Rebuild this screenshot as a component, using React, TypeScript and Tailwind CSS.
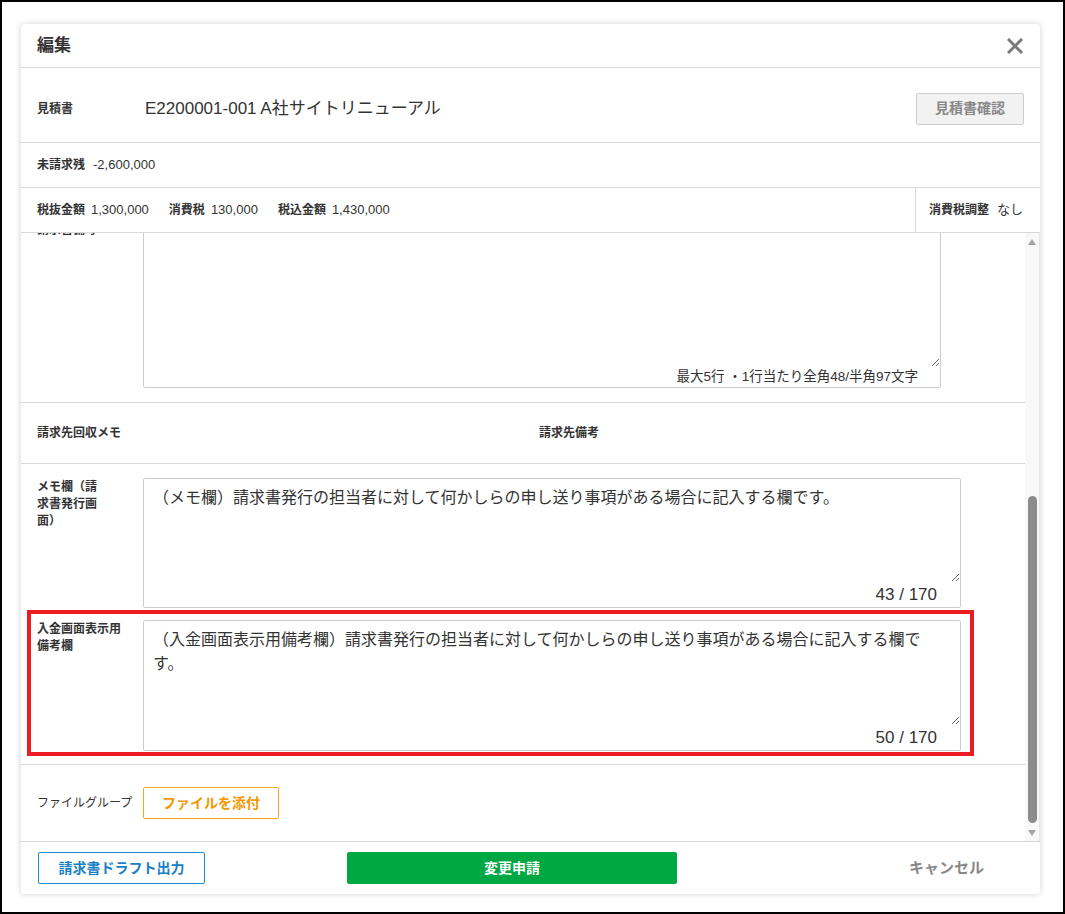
import React from "react";

const memoText =
  "（メモ欄）請求書発行の担当者に対して何かしらの申し送り事項がある場合に記入する欄です。";
const depositText =
  "（入金画面表示用備考欄）請求書発行の担当者に対して何かしらの申し送り事項がある場合に記入する欄です。";

function CountedArea({ value, count, tall }: { value: string; count: string; tall?: boolean }) {
  return (
    <div className={`flex w-[818px] flex-col rounded-[2px] border border-[#cccccc] bg-white ${tall ? "h-[131px]" : "h-[130px]"}`}>
      <textarea
        readOnly
        value={value}
        className="h-[104px] w-full resize-y overflow-hidden bg-transparent pl-[9px] pr-[30px] pt-[7px] text-[16px] leading-[24px] text-[#333] outline-none"
      />
      <div className="flex flex-1 items-center justify-end pr-[23px] text-[17px] text-[#333]">{count}</div>
    </div>
  );
}

function Amount({ label, value }: { label: string; value: string }) {
  return (
    <div className="flex items-center gap-[6px]">
      <span className="text-[12px] font-bold">{label}</span>
      <span className="text-[13px]">{value}</span>
    </div>
  );
}

export default function App() {
  return (
    <div className="h-[914px] w-[1065px] border-2 border-black bg-white pl-[19px] pt-[22px] font-['Liberation_Sans','Noto_Sans_CJK_JP',sans-serif] text-[#333]">
      <div className="flex h-[870px] w-[1019px] flex-col overflow-hidden rounded-[4px] bg-white shadow-[0_0_6px_rgba(0,0,0,0.18)]">
        {/* header */}
        <div className="flex h-[44px] shrink-0 items-center justify-between border-b border-[#d9d9d9] pl-[16px] pr-[16px]">
          <span className="text-[17px] font-bold">編集</span>
          <svg width="16" height="16" viewBox="0 0 16 16" className="mr-[1px]">
            <path d="M2 2 L14 14 M14 2 L2 14" stroke="#7a7a7a" strokeWidth="3" strokeLinecap="square" />
          </svg>
        </div>

        {/* estimate */}
        <div className="flex h-[75px] shrink-0 items-center border-b border-[#d9d9d9] pl-[16px] pr-[16px] pt-[7px]">
          <span className="w-[108px] text-[12px] font-bold">見積書</span>
          <span className="flex-1 text-[17px]">E2200001-001 A社サイトリニューアル</span>
          <button className="h-[32px] w-[108px] rounded-[2px] border border-[#cccccc] bg-[#f2f2f2] text-[14px] font-bold text-[#888]">
            見積書確認
          </button>
        </div>

        <div className="flex h-[45px] shrink-0 items-center gap-[8px] border-b border-[#d9d9d9] pl-[16px]">
          <span className="text-[12px] font-bold">未請求残</span>
          <span className="text-[13px]">-2,600,000</span>
        </div>

        <div className="flex h-[45px] shrink-0 border-b border-[#d9d9d9]">
          <div className="flex flex-1 items-center gap-[20px] pl-[16px]">
            <Amount label="税抜金額" value="1,300,000" />
            <Amount label="消費税" value="130,000" />
            <Amount label="税込金額" value="1,430,000" />
          </div>
          <div className="flex w-[125px] items-center gap-[8px] border-l border-[#d9d9d9] pl-[13px]">
            <span className="text-[12px] font-bold">消費税調整</span>
            <span className="text-[13px]">なし</span>
          </div>
        </div>

        {/* scroll area */}
        <div className="flex h-[608px] shrink-0">
          <div className="flex-1 overflow-hidden">
            <div className="-mt-[25px]">
              <div className="flex border-b border-[#d9d9d9] pb-[14px] pl-[16px] pt-[15px]">
                <div className="w-[106px] text-[12px] font-bold leading-[15px]">請求書備考</div>
                <div className="flex h-[165px] w-[798px] flex-col rounded-[2px] border border-[#cccccc]">
                  <textarea readOnly value="" className="h-[143px] w-full resize-y overflow-hidden outline-none" />
                  <div className="flex flex-1 items-center justify-end pr-[22px] text-[13.5px]">
                    最大5行 ・1行当たり全角48/半角97文字
                  </div>
                </div>
              </div>

              <div className="flex h-[61px] items-center border-b border-[#d9d9d9] pl-[16px] text-[12px] font-bold">
                <span className="w-[502px]">請求先回収メモ</span>
                <span>請求先備考</span>
              </div>

              <div className="relative flex flex-col gap-[12px] border-b border-[#d9d9d9] pb-[13px] pl-[16px] pt-[14px]">
                <div className="flex">
                  <div className="w-[106px] pt-[1px] text-[12px] font-bold leading-[17px]">
                    メモ欄（請<br />求書発行画<br />面）
                  </div>
                  <CountedArea value={memoText} count="43 / 170" />
                </div>
                <div className="flex">
                  <div className="w-[106px] pt-[1px] text-[12px] font-bold leading-[17px]">
                    入金画面表示用<br />備考欄
                  </div>
                  <CountedArea value={depositText} count="50 / 170" tall />
                </div>
                <div className="pointer-events-none absolute left-[6px] top-[146px] h-[146px] w-[947px] border-[4px] border-[#ed1c24]" />
              </div>

              <div className="flex h-[76px] items-center pl-[16px]">
                <span className="w-[106px] text-[12px]">ファイルグループ</span>
                <button className="h-[32px] rounded-[2px] border border-[#f5a623] bg-white px-[18px] text-[14px] font-bold text-[#f39800]">
                  ファイルを添付
                </button>
              </div>
            </div>
          </div>

          {/* scrollbar */}
          <div className="flex w-[15px] flex-col items-center border-r border-[#e6e6e6] bg-[#f8f8f8] pb-[5px] pt-[6px]">
            <svg width="8" height="6" viewBox="0 0 8 6">
              <path d="M0 6 L4 0 L8 6 Z" fill="#a3a3a3" />
            </svg>
            <div className="flex-1" />
            <div className="h-[327px] w-[9px] rounded-full bg-[#8c8c8c]" />
            <div className="h-[7px]" />
            <svg width="8" height="6" viewBox="0 0 8 6">
              <path d="M0 0 L8 0 L4 6 Z" fill="#a3a3a3" />
            </svg>
          </div>
        </div>

        {/* footer */}
        <div className="flex h-[53px] shrink-0 items-center border-t border-[#d9d9d9] pl-[17px]">
          <button className="h-[32px] w-[167px] rounded-[2px] border border-[#1d8acb] bg-white text-[14px] font-bold text-[#1a80c4]">
            請求書ドラフト出力
          </button>
          <button className="ml-[142px] h-[32px] w-[330px] rounded-[2px] bg-[#00a843] text-[14px] font-bold text-white">
            変更申請
          </button>
          <button className="ml-[232px] text-[15px] font-bold text-[#888]">キャンセル</button>
        </div>
      </div>
    </div>
  );
}
